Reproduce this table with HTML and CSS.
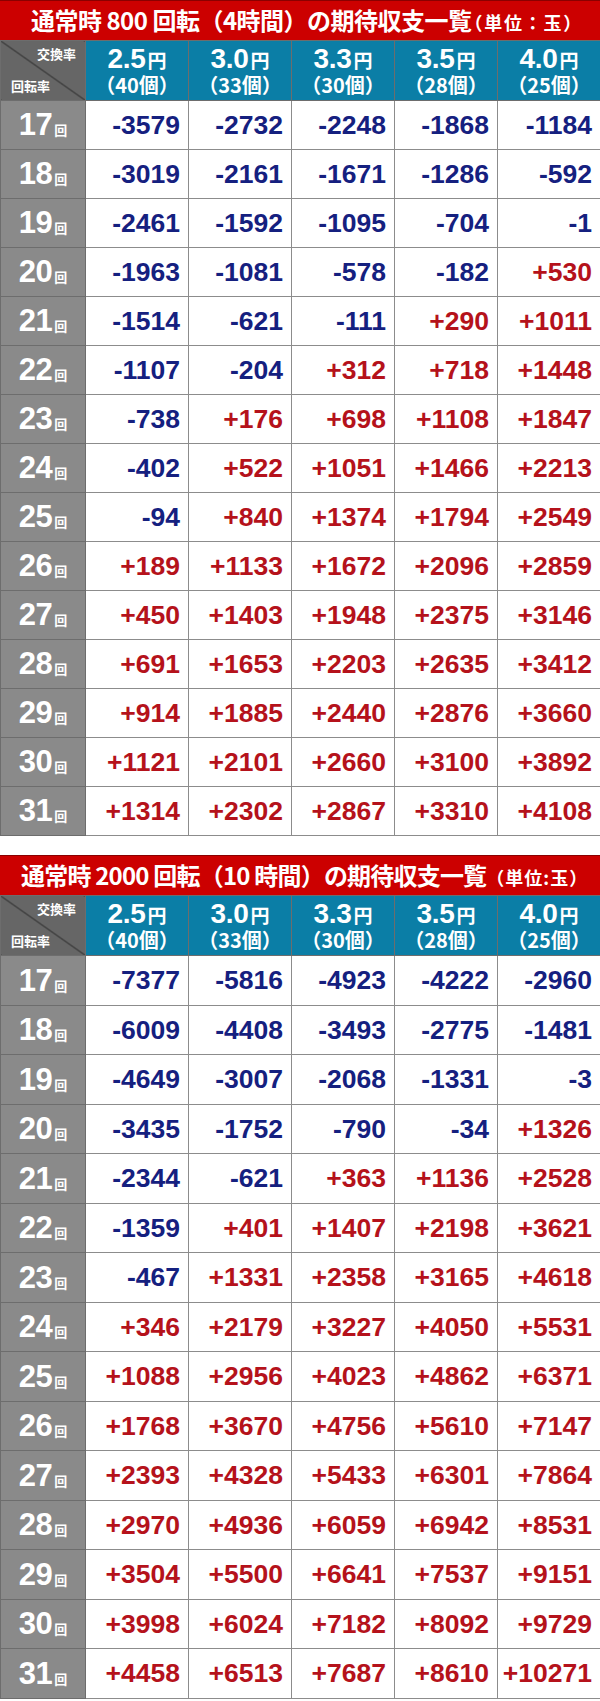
FILE: index.html
```html
<!DOCTYPE html>
<html lang="ja">
<head>
<meta charset="utf-8">
<link rel="stylesheet" href="styles.css">
</head>
<body>
<section class="block b1">
  <div class="title">通常時 800 回転（4時間）の期待収支一覧<span class="unit u1">（単位：玉）</span></div>
  <table class="grid">
    <colgroup><col class="c0"><col class="cn"><col class="cn"><col class="cn"><col class="cn"><col class="cn"></colgroup>
    <thead>
      <tr>
        <th class="corner"><span class="ex">交換率</span><span class="rt">回転率</span></th>
        <th class="rate"><div class="r1"><span class="big">2.5</span><span class="yen">円</span></div><div class="r2">（40個）</div></th>
        <th class="rate"><div class="r1"><span class="big">3.0</span><span class="yen">円</span></div><div class="r2">（33個）</div></th>
        <th class="rate"><div class="r1"><span class="big">3.3</span><span class="yen">円</span></div><div class="r2">（30個）</div></th>
        <th class="rate"><div class="r1"><span class="big">3.5</span><span class="yen">円</span></div><div class="r2">（28個）</div></th>
        <th class="rate"><div class="r1"><span class="big">4.0</span><span class="yen">円</span></div><div class="r2">（25個）</div></th>
      </tr>
    </thead>
    <tbody>
      <tr><th class="rot">17<span class="kai">回</span></th><td class="neg">-3579</td><td class="neg">-2732</td><td class="neg">-2248</td><td class="neg">-1868</td><td class="neg">-1184</td></tr>
      <tr><th class="rot">18<span class="kai">回</span></th><td class="neg">-3019</td><td class="neg">-2161</td><td class="neg">-1671</td><td class="neg">-1286</td><td class="neg">-592</td></tr>
      <tr><th class="rot">19<span class="kai">回</span></th><td class="neg">-2461</td><td class="neg">-1592</td><td class="neg">-1095</td><td class="neg">-704</td><td class="neg">-1</td></tr>
      <tr><th class="rot">20<span class="kai">回</span></th><td class="neg">-1963</td><td class="neg">-1081</td><td class="neg">-578</td><td class="neg">-182</td><td class="pos">+530</td></tr>
      <tr><th class="rot">21<span class="kai">回</span></th><td class="neg">-1514</td><td class="neg">-621</td><td class="neg">-111</td><td class="pos">+290</td><td class="pos">+1011</td></tr>
      <tr><th class="rot">22<span class="kai">回</span></th><td class="neg">-1107</td><td class="neg">-204</td><td class="pos">+312</td><td class="pos">+718</td><td class="pos">+1448</td></tr>
      <tr><th class="rot">23<span class="kai">回</span></th><td class="neg">-738</td><td class="pos">+176</td><td class="pos">+698</td><td class="pos">+1108</td><td class="pos">+1847</td></tr>
      <tr><th class="rot">24<span class="kai">回</span></th><td class="neg">-402</td><td class="pos">+522</td><td class="pos">+1051</td><td class="pos">+1466</td><td class="pos">+2213</td></tr>
      <tr><th class="rot">25<span class="kai">回</span></th><td class="neg">-94</td><td class="pos">+840</td><td class="pos">+1374</td><td class="pos">+1794</td><td class="pos">+2549</td></tr>
      <tr><th class="rot">26<span class="kai">回</span></th><td class="pos">+189</td><td class="pos">+1133</td><td class="pos">+1672</td><td class="pos">+2096</td><td class="pos">+2859</td></tr>
      <tr><th class="rot">27<span class="kai">回</span></th><td class="pos">+450</td><td class="pos">+1403</td><td class="pos">+1948</td><td class="pos">+2375</td><td class="pos">+3146</td></tr>
      <tr><th class="rot">28<span class="kai">回</span></th><td class="pos">+691</td><td class="pos">+1653</td><td class="pos">+2203</td><td class="pos">+2635</td><td class="pos">+3412</td></tr>
      <tr><th class="rot">29<span class="kai">回</span></th><td class="pos">+914</td><td class="pos">+1885</td><td class="pos">+2440</td><td class="pos">+2876</td><td class="pos">+3660</td></tr>
      <tr><th class="rot">30<span class="kai">回</span></th><td class="pos">+1121</td><td class="pos">+2101</td><td class="pos">+2660</td><td class="pos">+3100</td><td class="pos">+3892</td></tr>
      <tr><th class="rot">31<span class="kai">回</span></th><td class="pos">+1314</td><td class="pos">+2302</td><td class="pos">+2867</td><td class="pos">+3310</td><td class="pos">+4108</td></tr>
    </tbody>
  </table>
</section>

<section class="block b2">
  <div class="title t2">通常時 2000 回転（10 時間）の期待収支一覧<span class="unit u2">（単位:玉）</span></div>
  <table class="grid">
    <colgroup><col class="c0"><col class="cn"><col class="cn"><col class="cn"><col class="cn"><col class="cn"></colgroup>
    <thead>
      <tr>
        <th class="corner"><span class="ex">交換率</span><span class="rt">回転率</span></th>
        <th class="rate"><div class="r1"><span class="big">2.5</span><span class="yen">円</span></div><div class="r2">（40個）</div></th>
        <th class="rate"><div class="r1"><span class="big">3.0</span><span class="yen">円</span></div><div class="r2">（33個）</div></th>
        <th class="rate"><div class="r1"><span class="big">3.3</span><span class="yen">円</span></div><div class="r2">（30個）</div></th>
        <th class="rate"><div class="r1"><span class="big">3.5</span><span class="yen">円</span></div><div class="r2">（28個）</div></th>
        <th class="rate"><div class="r1"><span class="big">4.0</span><span class="yen">円</span></div><div class="r2">（25個）</div></th>
      </tr>
    </thead>
    <tbody>
      <tr><th class="rot">17<span class="kai">回</span></th><td class="neg">-7377</td><td class="neg">-5816</td><td class="neg">-4923</td><td class="neg">-4222</td><td class="neg">-2960</td></tr>
      <tr><th class="rot">18<span class="kai">回</span></th><td class="neg">-6009</td><td class="neg">-4408</td><td class="neg">-3493</td><td class="neg">-2775</td><td class="neg">-1481</td></tr>
      <tr><th class="rot">19<span class="kai">回</span></th><td class="neg">-4649</td><td class="neg">-3007</td><td class="neg">-2068</td><td class="neg">-1331</td><td class="neg">-3</td></tr>
      <tr><th class="rot">20<span class="kai">回</span></th><td class="neg">-3435</td><td class="neg">-1752</td><td class="neg">-790</td><td class="neg">-34</td><td class="pos">+1326</td></tr>
      <tr><th class="rot">21<span class="kai">回</span></th><td class="neg">-2344</td><td class="neg">-621</td><td class="pos">+363</td><td class="pos">+1136</td><td class="pos">+2528</td></tr>
      <tr><th class="rot">22<span class="kai">回</span></th><td class="neg">-1359</td><td class="pos">+401</td><td class="pos">+1407</td><td class="pos">+2198</td><td class="pos">+3621</td></tr>
      <tr><th class="rot">23<span class="kai">回</span></th><td class="neg">-467</td><td class="pos">+1331</td><td class="pos">+2358</td><td class="pos">+3165</td><td class="pos">+4618</td></tr>
      <tr><th class="rot">24<span class="kai">回</span></th><td class="pos">+346</td><td class="pos">+2179</td><td class="pos">+3227</td><td class="pos">+4050</td><td class="pos">+5531</td></tr>
      <tr><th class="rot">25<span class="kai">回</span></th><td class="pos">+1088</td><td class="pos">+2956</td><td class="pos">+4023</td><td class="pos">+4862</td><td class="pos">+6371</td></tr>
      <tr><th class="rot">26<span class="kai">回</span></th><td class="pos">+1768</td><td class="pos">+3670</td><td class="pos">+4756</td><td class="pos">+5610</td><td class="pos">+7147</td></tr>
      <tr><th class="rot">27<span class="kai">回</span></th><td class="pos">+2393</td><td class="pos">+4328</td><td class="pos">+5433</td><td class="pos">+6301</td><td class="pos">+7864</td></tr>
      <tr><th class="rot">28<span class="kai">回</span></th><td class="pos">+2970</td><td class="pos">+4936</td><td class="pos">+6059</td><td class="pos">+6942</td><td class="pos">+8531</td></tr>
      <tr><th class="rot">29<span class="kai">回</span></th><td class="pos">+3504</td><td class="pos">+5500</td><td class="pos">+6641</td><td class="pos">+7537</td><td class="pos">+9151</td></tr>
      <tr><th class="rot">30<span class="kai">回</span></th><td class="pos">+3998</td><td class="pos">+6024</td><td class="pos">+7182</td><td class="pos">+8092</td><td class="pos">+9729</td></tr>
      <tr><th class="rot">31<span class="kai">回</span></th><td class="pos">+4458</td><td class="pos">+6513</td><td class="pos">+7687</td><td class="pos">+8610</td><td class="pos">+10271</td></tr>
    </tbody>
  </table>
</section>
</body>
</html>
```
FILE: styles.css
```css
html, body {
  margin: 0;
  padding: 0;
  background: #fff;
}
body {
  width: 600px;
  font-family: "Liberation Sans", Arial, "Noto Sans CJK JP", sans-serif;
}
.block {
  width: 600px;
}
.b2 {
  margin-top: 19px;
}
.title {
  box-sizing: border-box;
  height: 40px;
  background: #cc0000;
  border-top: 1px solid #8a0000;
  color: #fff;
  font-family: "Noto Sans CJK JP", sans-serif;
  font-weight: 700;
  font-size: 24px;
  line-height: 38px;
  padding-left: 31px;
  white-space: nowrap;
  letter-spacing: -0.5px;
}
.title.t2 {
  padding-left: 21px;
  letter-spacing: -0.8px;
}
.title .unit {
  font-size: 18px;
}
.title .u1 {
  letter-spacing: 1.75px;
  margin-left: -7px;
}
.title .u2 {
  letter-spacing: 1px;
}
.grid {
  width: 600px;
  border-collapse: collapse;
  table-layout: fixed;
}
.c0 { width: 85px; }
.cn { width: 103px; }
.grid th, .grid td {
  border: 1px solid #6d6d6d;
  padding: 0;
}
.corner {
  position: relative;
  height: 59px;
  background: linear-gradient(to top right, #666666 calc(50% - 0.8px), #222 50%, #666666 calc(50% + 0.8px));
  color: #fff;
  font-family: "Noto Sans CJK JP", sans-serif;
  font-weight: 700;
  font-size: 13px;
  border-color: #555;
}
.corner .ex {
  position: absolute;
  right: 9px;
  top: 5px;
  line-height: 16px;
}
.corner .rt {
  position: absolute;
  left: 10px;
  bottom: 6px;
  line-height: 16px;
}
.rate {
  background: #0b7ea6;
  color: #fff;
  font-weight: 700;
  text-align: center;
  vertical-align: top;
  border-color: #3a5a6a;
}
.rate .r1 {
  margin-top: 3px;
  line-height: 30px;
  height: 30px;
}
.rate .big {
  font-family: "Liberation Sans", Arial, sans-serif;
  font-size: 28px;
  letter-spacing: -0.3px;
}
.rate .yen {
  font-family: "Noto Sans CJK JP", sans-serif;
  font-size: 19px;
  margin-left: 2px;
}
.rate .r2 {
  font-family: "Noto Sans CJK JP", sans-serif;
  font-size: 20px;
  line-height: 22px;
  font-feature-settings: "halt";
}
.rot {
  background: #8a8a8a;
  color: #fff;
  font-weight: 700;
  font-size: 31px;
  text-align: center;
  border-color: #555;
  letter-spacing: -0.5px;
  padding-left: 2px;
}
.rot .kai {
  font-family: "Noto Sans CJK JP", sans-serif;
  font-size: 13px;
  margin-left: 2px;
  letter-spacing: 0;
}
.b1 tbody tr { height: 49px; }
.b2 tbody tr { height: 49px; }
.b2 tbody tr:nth-child(odd) { height: 50px; }
.grid td {
  text-align: right;
  font-weight: 700;
  font-size: 26.5px;
  padding-right: 8px;
  background: #fff;
  border-color: #8c8c8c;
}
.neg { color: #15207f; }
.pos { color: #b5121b; }
```
